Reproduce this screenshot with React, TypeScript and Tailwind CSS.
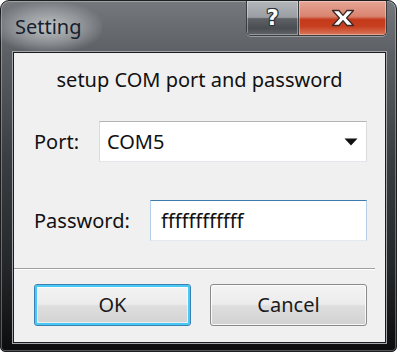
import React from 'react';

const font = { fontFamily: '"Noto Sans", "Open Sans", sans-serif' };

function CaptionButtons() {
  return (
    <div className="flex h-[35px] rounded-b-[5px] border border-t-0 border-[#3a3d40] overflow-hidden shadow-[0_1px_0_rgba(255,255,255,0.35)]">
      <div className="w-[52px] h-full flex items-center justify-center border-r border-[#3a3d40] bg-[linear-gradient(to_bottom,#b4b7ba_0%,#9a9ea2_48%,#5e6266_52%,#4a4e52_80%,#62666a_100%)] shadow-[inset_0_0_0_1px_rgba(255,255,255,0.35)]">
        <span
          className="text-[21px] font-black leading-none text-white pt-[1px] [text-shadow:1px_0_0_#2f3338,-1px_0_0_#2f3338,0_1px_0_#2f3338,0_-1px_0_#2f3338,1px_1px_0_#2f3338,-1px_-1px_0_#2f3338,1px_-1px_0_#2f3338,-1px_1px_0_#2f3338]"
          style={{ fontFamily: '"DejaVu Sans", sans-serif' }}
        >
          ?
        </span>
      </div>
      <div className="w-[87px] h-full flex items-center justify-center bg-[linear-gradient(to_bottom,#e6a595_0%,#d98470_45%,#c4391b_55%,#c7401f_75%,#d9785c_100%)] shadow-[inset_0_0_0_1px_rgba(255,255,255,0.35)]">
        <svg width="26" height="18" viewBox="0 0 26 18">
          <path
            d="M2.5 1.5 H9 L13 6.3 L17 1.5 H23.5 L16.6 9 L23.5 16.5 H17 L13 11.7 L9 16.5 H2.5 L9.4 9 Z"
            fill="#fff"
            stroke="#3a2a28"
            strokeWidth="1.3"
            strokeLinejoin="round"
          />
        </svg>
      </div>
    </div>
  );
}

function WinButton({ label, primary }: { label: string; primary?: boolean }) {
  return (
    <button
      className={
        'w-[157px] h-[42px] rounded-[3px] border text-[20px] text-[#1a1a1a] bg-[linear-gradient(to_bottom,#f3f3f3_0%,#ececec_48%,#dedede_52%,#d2d2d2_100%)] ' +
        (primary
          ? 'border-[#3c7fb1] shadow-[inset_0_0_0_2px_#48c8f4,inset_0_0_0_3px_rgba(255,255,255,0.6)]'
          : 'border-[#8a8a8a] shadow-[inset_0_0_0_1px_rgba(255,255,255,0.8)]')
      }
      style={font}
    >
      {label}
    </button>
  );
}

export default function App() {
  return (
    <div className="w-[400px] h-[354px] bg-white" style={font}>
      <div className="w-[397px] h-[352px] rounded-t-[9px] rounded-b-[5px] border border-[#1c1e20] flex flex-col bg-[linear-gradient(to_bottom,#75797d_0%,#5c6064_15%,#3a3d41_45%,#25282b_75%,#0c0d0e_100%)] shadow-[inset_0_0_0_1px_rgba(255,255,255,0.3)]">
        {/* title bar */}
        <div className="h-[50px] flex items-start pl-[14px] pr-[9px]">
          <div className="relative mt-[11px]">
            <div className="absolute -inset-x-[20px] -inset-y-[10px] rounded-full bg-[radial-gradient(ellipse_at_center,rgba(215,217,219,0.8)_0%,rgba(190,193,196,0.45)_45%,transparent_75%)]" />
            <span className="relative text-[20px] text-[#15202e] leading-[30px]">Setting</span>
          </div>
          <div className="flex-1" />
          <CaptionButtons />
        </div>

        {/* client area */}
        <div className="flex-1 ml-[11px] mr-[9px] mb-[7px] border border-[#a2a6aa]">
          <div className="h-full border border-[#1a1c1e] bg-[#f0f0f0] flex flex-col">
            <div className="h-[50px] flex items-center justify-center text-[20px] text-[#111] pt-[3px]">
              setup COM port and password
            </div>

            <div className="flex items-center mt-[18px] pl-[20px]">
              <span className="w-[65px] text-[20px] text-[#111]">Port:</span>
              <div className="w-[268px] h-[41px] bg-white border border-[#b4b4b4] border-b-[#e2e6ea] border-x-[#dcdcdc] flex items-center pl-[7px] pr-[8px]">
                <span className="flex-1 text-[20px] text-[#111]">COM5</span>
                <svg width="14" height="8" viewBox="0 0 14 8">
                  <path d="M0.5 0.5 H13.5 L7 7.5 Z" fill="#111" />
                </svg>
              </div>
            </div>

            <div className="flex items-center mt-[38px] pl-[20px]">
              <span className="w-[116px] text-[20px] text-[#111]">Password:</span>
              <div className="w-[217px] h-[41px] bg-white border border-[#3d7bad] border-x-[#b5cfe7] border-b-[#e3e9ef] flex items-center pl-[10px]">
                <span className="text-[20px] text-[#111]">ffffffffffff</span>
              </div>
            </div>

            <div className="mt-[27px] mr-[10px] h-[2px] border-t border-[#a0a0a0] border-b border-b-white" />

            <div className="flex items-center gap-[19px] pl-[20px] mt-[14px]">
              <WinButton label="OK" primary />
              <WinButton label="Cancel" />
            </div>
          </div>
        </div>
      </div>
    </div>
  );
}
